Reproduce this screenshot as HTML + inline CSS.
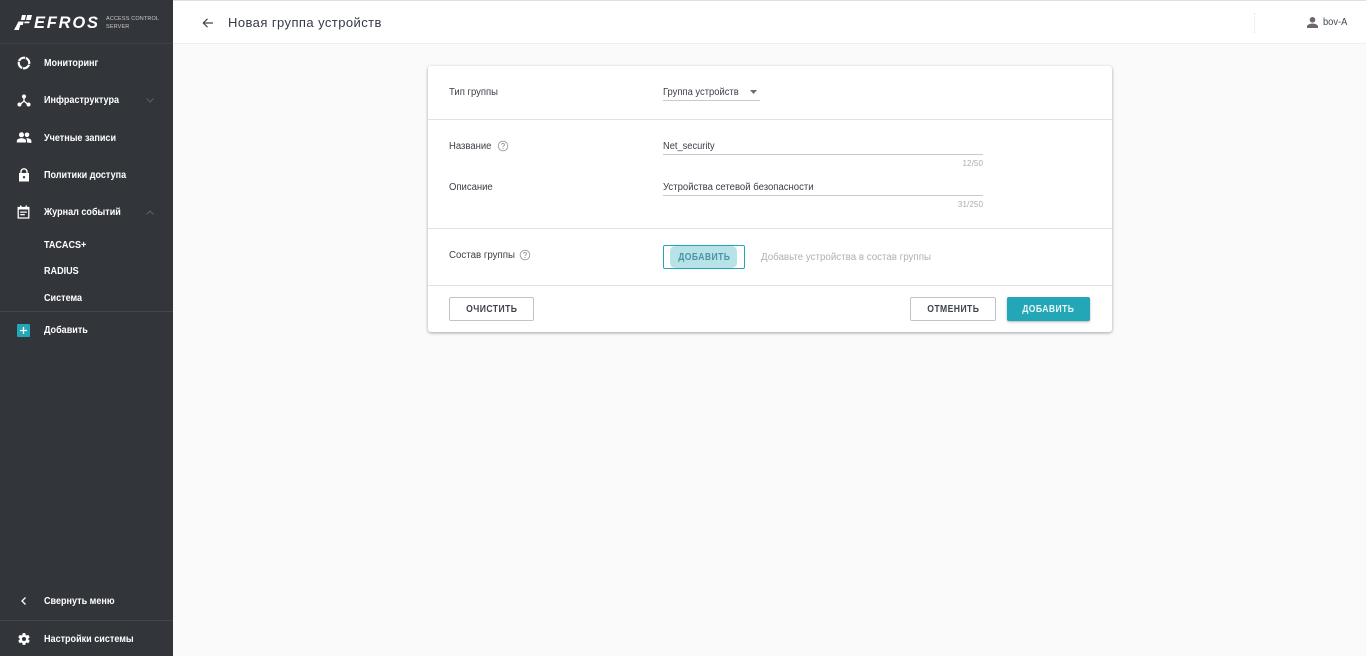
<!DOCTYPE html>
<html lang="ru"><head><meta charset="utf-8"><title>EFROS</title>
<style>
html,body{margin:0;padding:0;width:1366px;height:656px;overflow:hidden;background:#fafafa;font-family:"Liberation Sans","DejaVu Sans",sans-serif}
.a{position:absolute;white-space:nowrap}
#side{position:absolute;left:0;top:0;width:173px;height:656px;background:#32353a}
.m{position:absolute;left:44px;color:#fff;font-size:10px;font-weight:bold;line-height:14px;white-space:nowrap;transform:scaleX(.905);transform-origin:left}
.hr{position:absolute;height:1px}
.t{position:absolute;font-size:10px;color:#3c4048;line-height:14px;white-space:nowrap;transform:scaleX(.95);transform-origin:left}
.btn{position:absolute;box-sizing:border-box;height:24px;border-radius:2px;font-size:10px;font-weight:bold;letter-spacing:.5px;text-align:center;line-height:23px;white-space:nowrap}
.btn span{display:inline-block;transform:scaleX(.86)}
svg{position:absolute;display:block}
</style></head><body>
<div class="a" style="left:0;top:0;width:1366px;height:1px;background:#dfdfe2"></div>
<div class="a" style="left:173px;top:1px;width:1193px;height:42px;background:#fff"></div>
<div class="a" style="left:173px;top:43px;width:1193px;height:1px;background:#eeeeee"></div>

<svg style="left:201px;top:16px" width="14" height="14" viewBox="0 0 14 14"><path d="M12 7H2.500M6.500 2.800 2.300 7l4.200 4.200" fill="none" stroke="#44464d" stroke-width="1.200"/></svg>
<div class="a" style="left:228px;top:14px;font-size:13px;line-height:18px;color:#343a46;letter-spacing:.43px">Новая группа устройств</div>
<div class="a" style="left:1254px;top:13px;width:0;height:20px;border-left:1px dotted #e4e4e4"></div>
<svg style="left:1306px;top:16px" width="13" height="13" viewBox="0 0 13 13"><circle cx="6.500" cy="3.800" r="2.800" fill="#6d6570"/><path d="M1 12V10.500C1 8.600 4.200 7.600 6.500 7.600S12 8.600 12 10.500V12Z" fill="#6d6570"/></svg>
<div class="a" style="left:1323px;top:16px;font-size:10px;line-height:14px;color:#3f4753;transform:scaleX(.93);transform-origin:left">bov-A</div>

<div id="side">
<svg style="left:14px;top:15px" width="20" height="16" viewBox="0 0 20 16"><path d="M8 0h4l-1.200 5H6.800ZM13.200 0H18l-1.200 5h-4.800ZM4.500 6.500h5.200L8.800 10H6.300l-1.400 5H0ZM10.600 6.500h5l-.4 1.800h-5Z" fill="#fff"/></svg>
<div class="a" style="left:34px;top:13px;font-size:16.500px;line-height:20px;font-style:italic;font-weight:bold;color:#fff;letter-spacing:1.800px">EFROS</div>
<div class="a" style="left:106px;top:16px;font-size:5.500px;line-height:7.500px;color:#c9cacc;letter-spacing:.15px">ACCESS CONTROL<br>SERVER</div>
<div class="hr" style="left:0;top:43px;width:173px;background:#3f4247"></div>

<svg style="left:17px;top:56px" width="14" height="14" viewBox="0 0 14 14"><circle cx="7" cy="7" r="5.300" fill="none" stroke="#fff" stroke-width="2.200" stroke-dasharray="7.500 .8" transform="rotate(20 7 7)"/></svg>
<div class="m" style="top:57px">Мониторинг</div>

<svg style="left:17px;top:94px" width="14" height="13" viewBox="0 0 14 13"><path d="M7 3 7 7M7 7 3 10.500M7 7 11 10.500" stroke="#fff" stroke-width="1.300" fill="none"/><circle cx="7" cy="2.500" r="2" fill="#fff"/><circle cx="2.500" cy="10.500" r="2" fill="#fff"/><circle cx="11.500" cy="10.500" r="2" fill="#fff"/></svg>
<div class="m" style="top:94px">Инфраструктура</div>
<svg style="left:145px;top:97px" width="10" height="7" viewBox="0 0 10 7"><path d="M1.500 1.500 5 5l3.500-3.500" fill="none" stroke="#5e6165" stroke-width="1"/></svg>

<svg style="left:16px;top:132px" width="16" height="11" viewBox="0 0 16 11"><circle cx="5.500" cy="2.800" r="2.500" fill="#fff"/><circle cx="11" cy="2.800" r="2.300" fill="#fff"/><path d="M.8 10.500V9C.8 7.200 3.500 6.300 5.500 6.300S10 7.200 10 9v1.500Z" fill="#fff"/><path d="M11 10.500V8.800c0-.9-.4-1.700-1-2.300.4-.1.800-.2 1.200-.2 1.800 0 4.200.9 4.200 2.700v2Z" fill="#fff"/></svg>
<div class="m" style="top:132px">Учетные записи</div>

<svg style="left:18px;top:168px" width="12" height="14" viewBox="0 0 12 14"><path d="M3 5V3.800a3 3 0 0 1 6 0V5" fill="none" stroke="#fff" stroke-width="1.400"/><path d="M1 5h10v8.500H1Z" fill="#fff"/><circle cx="6" cy="9.200" r="1.200" fill="#32353a"/></svg>
<div class="m" style="top:169px">Политики доступа</div>

<svg style="left:17px;top:205px" width="13" height="14" viewBox="0 0 13 14"><path d="M1.200 2.500h10.600v10.500H1.200Z" fill="none" stroke="#fff" stroke-width="1.300"/><path d="M1 2h11v2.500H1ZM3 .5h1.500V2H3ZM8.500.5H10V2H8.500Z" fill="#fff"/><path d="M3.200 6.500h6.600v1.300H3.200ZM3.200 9h4.600v1.300H3.200Z" fill="#fff"/></svg>
<div class="m" style="top:206px">Журнал событий</div>
<svg style="left:145px;top:209px" width="10" height="7" viewBox="0 0 10 7"><path d="M1.500 5.500 5 2l3.500 3.500" fill="none" stroke="#5e6165" stroke-width="1"/></svg>

<div class="m" style="top:239px">TACACS+</div>
<div class="m" style="top:265px">RADIUS</div>
<div class="m" style="top:292px">Система</div>
<div class="hr" style="left:0;top:311px;width:173px;background:#44474c"></div>

<svg style="left:17px;top:324px" width="13" height="13" viewBox="0 0 13 13"><rect width="13" height="13" rx="1" fill="#23a6b5"/><path d="M6.500 3v7M3 6.500h7" stroke="#fff" stroke-width="1.300"/></svg>
<div class="m" style="top:324px">Добавить</div>

<svg style="left:20px;top:596px" width="7" height="10" viewBox="0 0 7 10"><path d="M5.500 1.500 2 5l3.500 3.500" fill="none" stroke="#fff" stroke-width="1.300"/></svg>
<div class="m" style="top:595px">Свернуть меню</div>
<div class="hr" style="left:0;top:620px;width:173px;background:#44474c"></div>

<svg style="left:17px;top:632px" width="14" height="14" viewBox="0 0 24 24"><path fill="#fff" d="M19.400 13c.04-.32.100-.65.100-1s-.06-.68-.1-1l2.100-1.650c.2-.15.25-.42.120-.64l-2-3.460c-.12-.22-.38-.3-.6-.22l-2.500 1c-.52-.4-1.080-.73-1.700-.98l-.38-2.650A.49.490 0 0 0 14 2h-4c-.25 0-.46.180-.5.420l-.37 2.650c-.61.250-1.170.590-1.690.980l-2.490-1c-.23-.09-.49 0-.61.220l-2 3.460c-.130.220-.07.490.120.640L4.570 11c-.04.320-.07.650-.07 1s.03.680.07 1l-2.110 1.650c-.19.150-.25.420-.12.640l2 3.460c.120.220.380.300.610.220l2.490-1c.520.400 1.080.730 1.690.980l.370 2.650c.040.240.250.420.500.420h4c.250 0 .460-.180.490-.420l.380-2.650c.610-.250 1.170-.590 1.690-.980l2.490 1c.230.090.490 0 .610-.220l2-3.460c.120-.220.070-.490-.120-.640ZM12 15.500a3.500 3.500 0 1 1 0-7 3.500 3.500 0 0 1 0 7Z"/></svg>
<div class="m" style="top:633px">Настройки системы</div>
</div>

<div class="a" style="left:428px;top:66px;width:684px;height:266px;background:#fff;border-radius:3px;box-shadow:0 1px 3px rgba(0,0,0,.35)"></div>
<div class="hr" style="left:428px;top:119px;width:684px;background:#e2e2e2"></div>
<div class="hr" style="left:428px;top:228px;width:684px;background:#e2e2e2"></div>
<div class="hr" style="left:428px;top:285px;width:684px;background:#e2e2e2"></div>

<div class="t" style="left:449px;top:86px">Тип группы</div>
<div class="t" style="left:663px;top:86px;color:#3a3f48;transform:scaleX(.94)">Группа устройств</div>
<svg style="left:750px;top:90px" width="7" height="4" viewBox="0 0 7 4"><path d="M0 0h7L3.500 4Z" fill="#6b6b72"/></svg>
<div class="hr" style="left:663px;top:100px;width:97px;background:#c9c9cf"></div>

<div class="t" style="left:449px;top:140px">Название</div>
<svg style="left:497px;top:140px" width="12" height="12" viewBox="0 0 12 12"><circle cx="6" cy="6" r="4.800" fill="none" stroke="#9a9a9a" stroke-width=".9"/><path d="M4.500 4.800C4.500 3.900 5.200 3.400 6 3.400s1.500.5 1.500 1.300c0 1.100-1.500 1.200-1.500 2.300" fill="none" stroke="#9a9a9a" stroke-width=".9"/><circle cx="6" cy="8.500" r=".6" fill="#9a9a9a"/></svg>
<div class="t" style="left:663px;top:140px;color:#3a3f48;transform:scaleX(.93)">Net_security</div>
<div class="hr" style="left:663px;top:154px;width:320px;background:#c9c9cf"></div>
<div class="a" style="left:943px;top:159px;width:40px;text-align:right;font-size:8px;line-height:10px;color:#a9adae;letter-spacing:.1px">12/50</div>

<div class="t" style="left:449px;top:181px">Описание</div>
<div class="t" style="left:663px;top:181px;color:#3a3f48;transform:scaleX(.955)">Устройства сетевой безопасности</div>
<div class="hr" style="left:663px;top:195px;width:320px;background:#c9c9cf"></div>
<div class="a" style="left:943px;top:200px;width:40px;text-align:right;font-size:8px;line-height:10px;color:#a9adae;letter-spacing:.1px">31/250</div>

<div class="t" style="left:449px;top:249px;transform:scaleX(.97)">Состав группы</div>
<svg style="left:519px;top:249px" width="12" height="12" viewBox="0 0 12 12"><circle cx="6" cy="6" r="4.800" fill="none" stroke="#9a9a9a" stroke-width=".9"/><path d="M4.500 4.800C4.500 3.900 5.200 3.400 6 3.400s1.500.5 1.500 1.300c0 1.100-1.500 1.200-1.500 2.300" fill="none" stroke="#9a9a9a" stroke-width=".9"/><circle cx="6" cy="8.500" r=".6" fill="#9a9a9a"/></svg>
<div class="btn" style="left:663px;top:245px;width:82px;border:1px solid #23a6b5;background:#fff"></div>
<div class="a" style="left:670px;top:246px;width:67px;height:22px;border-radius:5px;background:#b7e2e8"></div>
<div class="btn" style="left:663px;top:245px;width:82px;color:#4a94a6;background:none;line-height:25px"><span>ДОБАВИТЬ</span></div>
<div class="a" style="left:761px;top:251px;font-size:10px;line-height:14px;color:#adb2b3;transform:scaleX(.975);transform-origin:left">Добавьте устройства в состав группы</div>

<div class="btn" style="left:449px;top:297px;width:85px;border:1px solid #c3c3c3;background:#fff;color:#3f4350"><span>ОЧИСТИТЬ</span></div>
<div class="btn" style="left:910px;top:297px;width:86px;border:1px solid #c3c3c3;background:#fff;color:#3f4350"><span>ОТМЕНИТЬ</span></div>
<div class="btn" style="left:1007px;top:297px;width:83px;background:#23a6b5;color:#e8f6f8;line-height:25px;box-shadow:0 1px 2px rgba(0,0,0,.3)"><span>ДОБАВИТЬ</span></div>
</body></html>
